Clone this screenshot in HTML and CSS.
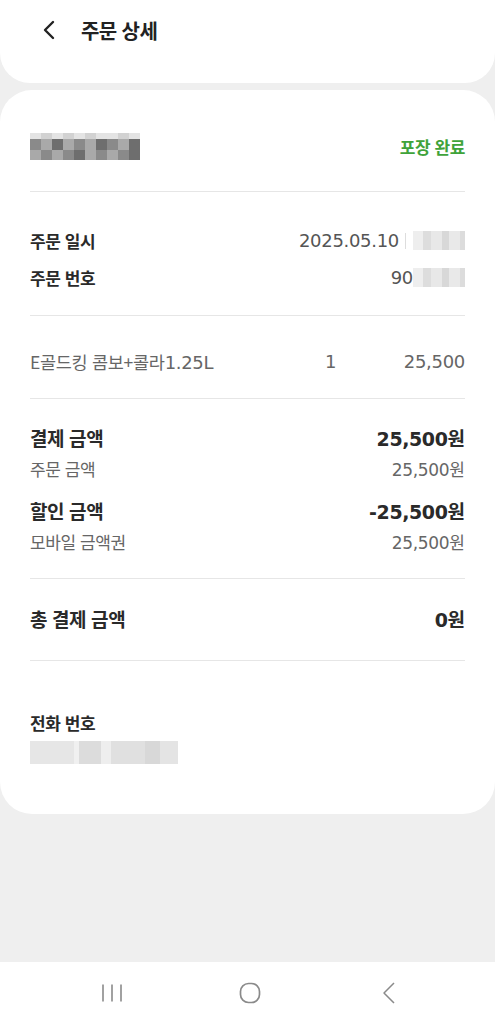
FILE: index.html
```html
<!DOCTYPE html>
<html lang="ko">
<head>
<meta charset="utf-8">
<link rel="stylesheet" href="styles.css">
</head>
<body>
<div class="screen">
  <header class="topbar">
    <div class="topbar-row">
      <svg class="back" width="14" height="20" viewBox="0 0 14 20"><path d="M11 2 L3 10 L11 18" fill="none" stroke="#222" stroke-width="2.4" stroke-linecap="round" stroke-linejoin="round"/></svg>
      <h1 class="title">주문 상세</h1>
    </div>
  </header>

  <main class="card">
    <section class="status-row">
      <div class="blur blur-store">
        <span class="c b0"></span><span class="c b1"></span><span class="c b0"></span><span class="c b1"></span><span class="c b0"></span><span class="c b1"></span><span class="c b0"></span><span class="c b0"></span><span class="c b1"></span><span class="c b0"></span>
        <span class="c b3"></span><span class="c b2"></span><span class="c b4"></span><span class="c b2"></span><span class="c b3"></span><span class="c b2"></span><span class="c b4"></span><span class="c b3"></span><span class="c b2"></span><span class="c b4"></span>
        <span class="c b2"></span><span class="c b3"></span><span class="c b2"></span><span class="c b3"></span><span class="c b4"></span><span class="c b2"></span><span class="c b3"></span><span class="c b2"></span><span class="c b3"></span><span class="c b4"></span>
      </div>
      <span class="status">포장 완료</span>
    </section>

    <section class="info">
      <div class="row">
        <span class="label-b">주문 일시</span>
        <span class="value"><span class="num">2025.05.10</span><span class="sep"></span><span class="blur blur-light w52"></span></span>
      </div>
      <div class="row">
        <span class="label-b">주문 번호</span>
        <span class="value"><span class="num">90</span><span class="blur blur-light w52"></span></span>
      </div>
    </section>

    <section class="items">
      <div class="item">
        <span class="item-name">E골드킹 콤보+콜라<span class="num">1.25L</span></span>
        <span class="item-qty num">1</span>
        <span class="item-price num">25,500</span>
      </div>
    </section>

    <section class="pay">
      <div class="row">
        <span class="label-l">결제 금액</span>
        <span class="amount-b"><span class="num">25,500</span>원</span>
      </div>
      <div class="row sub">
        <span class="label-s">주문 금액</span>
        <span class="amount-s"><span class="num">25,500</span>원</span>
      </div>
      <div class="row gap">
        <span class="label-l">할인 금액</span>
        <span class="amount-b"><span class="num">-25,500</span>원</span>
      </div>
      <div class="row sub">
        <span class="label-s">모바일 금액권</span>
        <span class="amount-s"><span class="num">25,500</span>원</span>
      </div>
    </section>

    <section class="total">
      <div class="row">
        <span class="label-l">총 결제 금액</span>
        <span class="amount-b"><span class="num">0</span>원</span>
      </div>
    </section>

    <section class="phone">
      <div class="label-b">전화 번호</div>
      <div class="blur blur-phone"></div>
    </section>
  </main>

  <nav class="navbar">
    <svg width="24" height="22" viewBox="0 0 24 22"><path d="M3 2.5 V19.5 M12 2.5 V19.5 M21 2.5 V19.5" stroke="#8a8a8a" stroke-width="1.6" fill="none"/></svg>
    <svg class="home" width="24" height="24" viewBox="0 0 24 24"><rect x="2.5" y="2.5" width="19" height="19" rx="8" fill="none" stroke="#8a8a8a" stroke-width="1.7"/></svg>
    <svg width="16" height="24" viewBox="0 0 16 24"><path d="M13 2 L3 12 L13 22" fill="none" stroke="#8a8a8a" stroke-width="1.5" stroke-linejoin="round"/></svg>
  </nav>
</div>
</body>
</html>
```
FILE: styles.css
```css
* { box-sizing: border-box; margin: 0; padding: 0; }
html, body { width: 495px; height: 1024px; }
body {
  background: #efefef;
  font-family: "Noto Sans CJK KR", "Noto Sans", sans-serif;
  color: #333;
}
.screen {
  height: 1024px;
  display: flex;
  flex-direction: column;
}
.num { font-family: "DejaVu Sans", "Noto Sans CJK KR", sans-serif; letter-spacing: -0.3px; }

.topbar {
  height: 83px;
  background: #fff;
  border-radius: 0 0 30px 30px;
  padding: 14px 0 0 42px;
}
.topbar-row {
  height: 32px;
  display: flex;
  align-items: center;
  gap: 25px;
}
.title {
  font-size: 20px;
  font-weight: 700;
  color: #222;
  letter-spacing: -0.6px;
}

.card {
  margin-top: 7px;
  background: #fff;
  border-radius: 32px;
  padding: 0 30px 45px;
}
.card > section + section { border-top: 1px solid #e6e6e6; }

.status-row {
  padding: 36px 0 25px;
  height: 101px;
  display: flex;
  align-items: center;
  justify-content: space-between;
}
.status {
  color: #3fa33a;
  font-size: 17px;
  font-weight: 700;
  letter-spacing: -0.4px;
}

.blur { display: inline-block; }
.blur-store {
  width: 110px;
  height: 27px;
  display: grid;
  grid-template-columns: repeat(10, 11px);
  grid-template-rows: 6px 11px 10px;
}
.c { display: block; }
.b0 { background: #e4e4e4; }
.b1 { background: #d2d2d2; }
.b2 { background: #a9a9a9; }
.b3 { background: #8a8a8a; }
.b4 { background: #6e6e6e; }

.blur-light {
  height: 19px;
  background: linear-gradient(90deg, #eee 0 20%, #ddd 20% 35%, #e8e8e8 35% 55%, #d8d8d8 55% 70%, #e9e9e9 70% 90%, #dcdcdc 90%);
}
.w52 { width: 52px; }
.sep {
  display: inline-block;
  width: 1px;
  height: 16px;
  background: #ddd;
  margin: 0 7px 0 6px;
}

.row {
  display: flex;
  align-items: center;
  justify-content: space-between;
}
.info { padding: 30px 0 19px; }
.info .row { height: 37px; }
.label-b {
  font-size: 17px;
  font-weight: 700;
  color: #2a2a2a;
  letter-spacing: -0.4px;
}
.value {
  display: flex;
  align-items: center;
  font-size: 17px;
  color: #555;
}
.value .num { font-size: 18px; }

.items { padding: 31px 0 23px; }
.item {
  height: 28px;
  display: flex;
  align-items: center;
  font-size: 17.5px;
  color: #666;
}
.item .num { font-size: 18px; }
.item-name { flex: 1; letter-spacing: -0.3px; }
.item-qty { width: 60px; text-align: left; }
.item-price { width: 80px; text-align: right; }

.pay { padding: 23px 0 21px; }
.pay .row { height: 31px; }
.pay .row.gap { margin-top: 11px; }
.label-l {
  font-size: 19px;
  font-weight: 700;
  color: #2a2a2a;
  letter-spacing: -0.4px;
}
.amount-b {
  font-size: 19px;
  font-weight: 700;
  color: #2a2a2a;
}
.amount-b .num { font-weight: 700; letter-spacing: -0.4px; }
.label-s {
  font-size: 17px;
  color: #666;
  letter-spacing: -0.4px;
}
.amount-s {
  font-size: 17px;
  color: #666;
}

.total { padding: 24px 0 27px; }
.total .row { height: 30px; }

.phone { padding: 50px 0 0; }
.phone .label-b { height: 24px; line-height: 24px; }
.blur-phone {
  margin-top: 6px;
  width: 148px;
  height: 23px;
  background: linear-gradient(90deg, #e6e6e6 0 30%, #f0f0f0 30% 33%, #dcdcdc 33% 48%, #eee 48% 55%, #e0e0e0 55% 78%, #d8d8d8 78% 88%, #e4e4e4 88%);
}

.navbar {
  margin-top: auto;
  height: 62px;
  background: #fff;
  display: flex;
  align-items: center;
  justify-content: space-between;
  padding: 0 98px 0 100px;
}
.home { margin-right: 6px; }
```
